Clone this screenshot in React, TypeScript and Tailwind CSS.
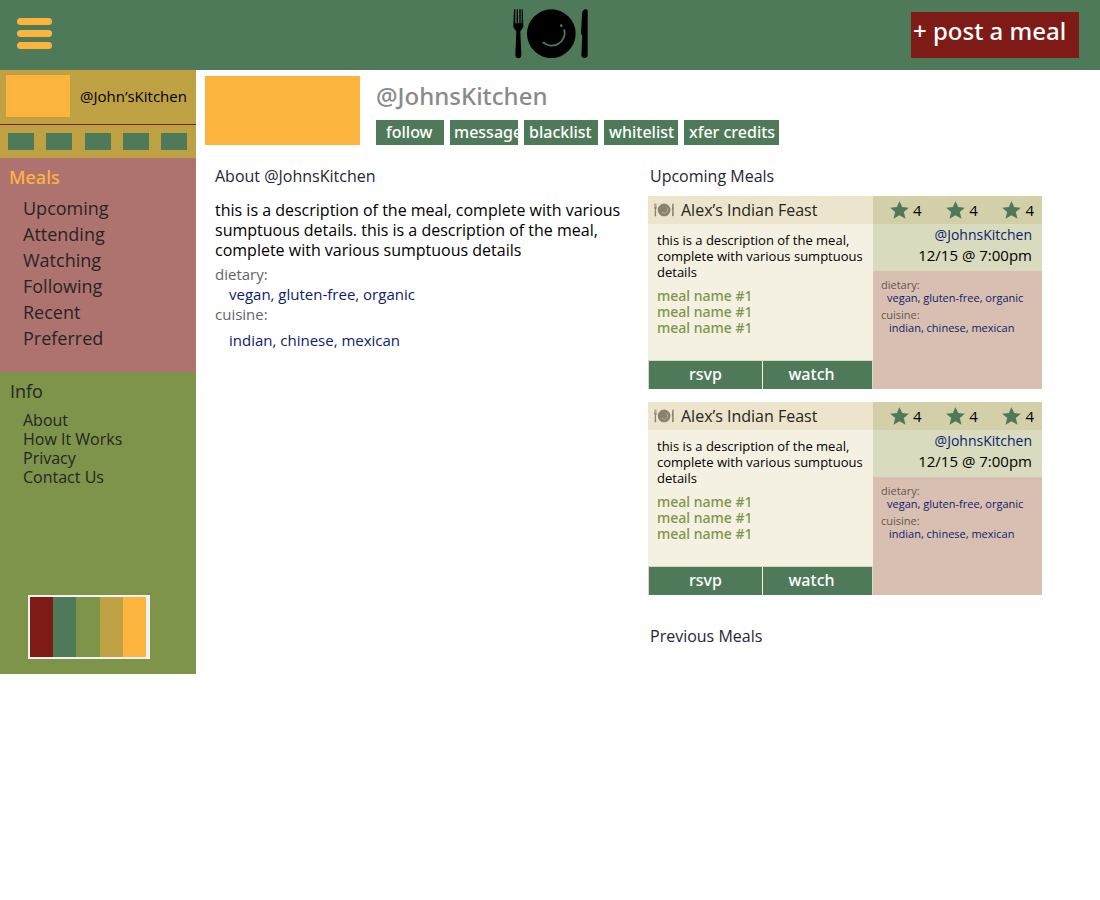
import React from 'react';

function PlateIcon({ className }: { className: string }) {
  return (
    <svg viewBox="69 26 228 150" className={className} fill="currentColor" aria-hidden="true">
      <path d="M72 27h4v42h4V27h4v42h4V27h4v42h3V27h3l2 49c0 10-9 12-9 19l3 68c0 14-18 14-18 0l3-68c0-7-9-9-9-19z" />
      <path
        fillRule="evenodd"
        d="M184 27a73 73 0 1 0 0 146a73 73 0 1 0 0-146zM161 124a36 36 0 0 0 59-36q3-3 6 0a42 42 0 0 1-69 40q0-4 4-4zM214 72a4 4 0 1 1 0 8a4 4 0 1 1 0-8z"
      />
      <path d="M293 32v132c0 12-19 12-19 0l3-58c-2-2-4-5-4-10l3-52c1-13 5-17 12-17q5 0 5 5z" />
    </svg>
  );
}

function StarIcon() {
  return (
    <svg viewBox="0 0 56 54" className="h-[18px] w-[19px] text-[#4f7a59]" fill="currentColor" aria-hidden="true">
      <path d="M28 0l8 18 20 2-15 13 5 20-18-10-18 10 5-20L0 20l20-2z" />
    </svg>
  );
}

const mealLinks = ['Upcoming', 'Attending', 'Watching', 'Following', 'Recent', 'Preferred'];
const infoLinks = ['About', 'How It Works', 'Privacy', 'Contact Us'];
const shortcuts = ['Profile', 'Messages', 'Calendar', 'Credits', 'Settings'];

function Sidebar() {
  return (
    <aside className="flex w-[196px] shrink-0 flex-col">
      <div className="flex h-[54px] items-center gap-2.5 bg-[#bda143] pb-0.5 pl-1.5">
        <div className="h-[42px] w-16 bg-[#fdb43f]" />
        <a href="#profile" className="text-[15px] text-black">@John’sKitchen</a>
      </div>
      <div className="flex h-[34px] items-center justify-between border-t border-[#7e1b16] bg-[#bda143] pr-[9px] pl-2">
        {shortcuts.map((name) => (
          <button key={name} aria-label={name} className="h-[17px] w-[26px] bg-[#4f7a59]" />
        ))}
      </div>
      <nav aria-label="Meals" className="bg-[#af736f] pt-[5px] pb-[21px] text-lg text-[#252525]">
        <h2 className="pl-[9px] font-['Noto_Sans',sans-serif] font-medium leading-7 text-[#fdb43f]">Meals</h2>
        <ul className="pt-1 pl-[23px] leading-[26px]">
          {mealLinks.map((name) => (
            <li key={name}><a href={`#${name.toLowerCase()}`}>{name}</a></li>
          ))}
        </ul>
      </nav>
      <nav aria-label="Info" className="bg-[#7e944a] pt-[5px] text-[#252525]">
        <h2 className="pl-2.5 text-lg leading-7">Info</h2>
        <ul className="pt-1.5 pl-[23px] text-base leading-[19px]">
          {infoLinks.map((name) => (
            <li key={name}><a href="#info">{name}</a></li>
          ))}
        </ul>
      </nav>
      <div className="bg-[#7e944a] px-7 pt-[108px] pb-[15px]">
        <div className="flex h-16 w-[122px] border-2 border-r-4 border-[#f2f2f2]">
          <div className="flex-1 bg-[#7e1b16]" />
          <div className="flex-1 bg-[#4f7a59]" />
          <div className="flex-1 bg-[#7e944a]" />
          <div className="flex-1 bg-[#bda143]" />
          <div className="flex-1 bg-[#fdb43f]" />
        </div>
      </div>
    </aside>
  );
}

function MealCard() {
  return (
    <article className="flex w-[394px] max-w-full">
      <div className="flex w-[225px] flex-col bg-[#f4f1e2]">
        <h3 className="flex h-7 items-center gap-[7px] bg-[#ece4cb] pl-1.5 text-base text-[#252525]">
          <PlateIcon className="h-3.5 w-5 text-[#89826f]" />
          Alex’s Indian Feast
        </h3>
        <div className="px-[9px] pt-2 text-[13px] leading-4 text-black">
          <p>this is a description of the meal, complete with various sumptuous details</p>
          <ul className="pt-2 font-['Noto_Sans',sans-serif] text-sm leading-4 font-medium text-[#7e944a]">
            <li>meal name #1</li>
            <li>meal name #1</li>
            <li>meal name #1</li>
          </ul>
        </div>
        <div className="mt-6 grid h-[29px] grid-cols-[113fr_109fr] gap-px border-t border-r border-l border-[#dbd8c0] font-['Noto_Sans',sans-serif] font-medium text-white">
          <button className="bg-[#4f7a59] pb-0.5">rsvp</button>
          <button className="bg-[#4f7a59] pr-3 pb-0.5">watch</button>
        </div>
      </div>
      <div className="flex flex-1 flex-col bg-[#d9bfb2]">
        <div className="flex h-7 items-center justify-between bg-[#d2cfa9] pr-2 pl-[17px] text-[15px] text-black">
          <span className="flex items-center gap-1"><StarIcon />4</span>
          <span className="flex items-center gap-1"><StarIcon />4</span>
          <span className="flex items-center gap-1"><StarIcon />4</span>
        </div>
        <div className="h-[47px] bg-[#d8dbbd] pr-2.5 text-right text-[15px] leading-[21px] text-black">
          <a href="#profile" className="block text-sm leading-[21px] text-[#0c226b]">@JohnsKitchen</a>
          <p>12/15 @ 7:00pm</p>
        </div>
        <dl className="pt-[7px] pl-2 text-[11px] leading-[13px]">
          <dt className="text-[#65564f]">dietary:</dt>
          <dd className="pb-1 pl-1.5 text-[#0c226b]">vegan, gluten-free, organic</dd>
          <dt className="text-[#65564f]">cuisine:</dt>
          <dd className="pl-2 text-[#0c226b]">indian, chinese, mexican</dd>
        </dl>
      </div>
    </article>
  );
}

const action =
  "h-[25px] shrink-0 overflow-hidden bg-[#4f7a59] text-left font-['Noto_Sans',sans-serif] font-medium whitespace-nowrap text-white leading-6 pb-0.5";

export default function App() {
  return (
    <div className="min-h-screen bg-white font-['Open_Sans','Noto_Sans',sans-serif] text-base">
      <header className="grid h-[70px] grid-cols-3 items-center bg-[#4f7a59]">
        <button aria-label="Menu" className="mb-1 ml-[17px] flex w-[35px] flex-col gap-[5px]">
          <span className="h-[7px] w-full rounded-full bg-[#fdb43f]" />
          <span className="h-[7px] w-full rounded-full bg-[#fdb43f]" />
          <span className="h-[7px] w-full rounded-full bg-[#fdb43f]" />
        </button>
        <a href="#home" aria-label="Home" className="justify-self-center pb-0.5 pl-0.5 text-black">
          <PlateIcon className="h-[50px] w-[76px]" />
        </a>
        <button className="mr-[21px] h-[46px] w-[168px] justify-self-end bg-[#7e1b16] pb-2 pl-0.5 text-left font-['Noto_Sans',sans-serif] text-2xl font-medium whitespace-nowrap text-white">
          + post a meal
        </button>
      </header>
      <div className="flex items-start">
        <Sidebar />
        <main className="min-w-0 flex-1 pt-1.5 pl-[9px]">
          <div className="flex gap-4">
            <div className="h-[69px] w-[155px] shrink-0 bg-[#fdb43f]" />
            <div>
              <h1 className="h-11 font-['Noto_Sans',sans-serif] text-2xl leading-10 font-medium text-[#8a8a8a]">@JohnsKitchen</h1>
              <div className="flex gap-1.5">
                <button className={`${action} w-[68px] pl-2.5`}>follow</button>
                <button className={`${action} w-[68px] pl-1`}>message</button>
                <button className={`${action} w-[74px] pl-[5px]`}>blacklist</button>
                <button className={`${action} w-[74px] pl-[5px]`}>whitelist</button>
                <button className={`${action} w-[95px] pl-[5px]`}>xfer credits</button>
              </div>
            </div>
          </div>
          <div className="flex pt-[19px]">
            <section className="w-[443px] shrink-0 pr-4 pl-2.5">
              <h2 className="leading-6 text-[#252538]">About @JohnsKitchen</h2>
              <p className="pt-3 leading-5 text-black">
                this is a description of the meal, complete with various sumptuous details. this is a description of the meal, complete with various sumptuous details
              </p>
              <dl className="pt-1 text-[15px] leading-5">
                <dt className="text-[#65656a]">dietary:</dt>
                <dd className="pl-3.5 text-[#0c226b]">vegan, gluten-free, organic</dd>
                <dt className="text-[#65656a]">cuisine:</dt>
                <dd className="pt-1.5 pl-3.5 text-[#0c226b]">indian, chinese, mexican</dd>
              </dl>
            </section>
            <section className="min-w-0 flex-1">
              <h2 className="pl-0.5 leading-6 text-[#252538]">Upcoming Meals</h2>
              <div className="flex flex-col gap-[13px] pt-2">
                <MealCard />
                <MealCard />
              </div>
              <h2 className="pt-[29px] pl-0.5 leading-6 text-[#252538]">Previous Meals</h2>
            </section>
          </div>
        </main>
      </div>
    </div>
  );
}
